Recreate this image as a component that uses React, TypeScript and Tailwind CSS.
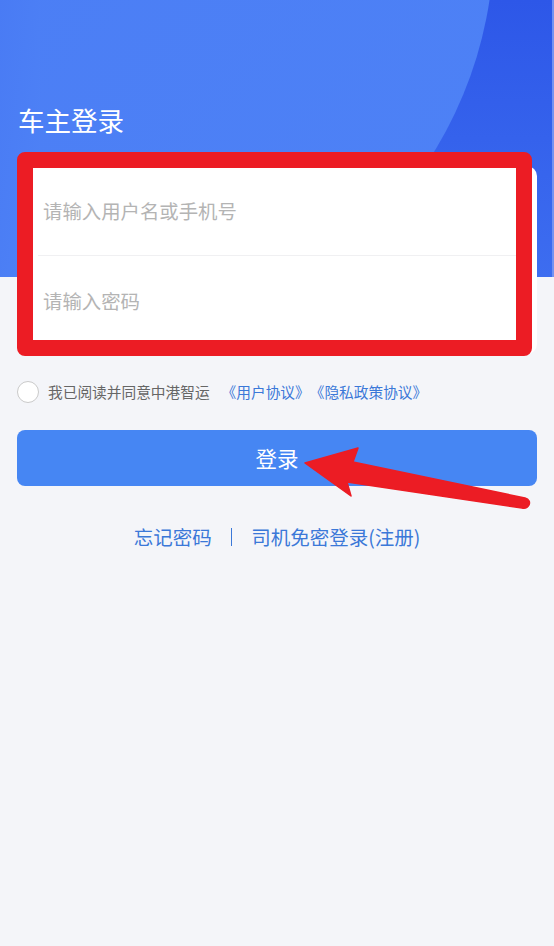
import React from "react";

function Open() {
  return <span className="inline-block w-[14.7px] text-right">《</span>;
}
function Close() {
  return <span className="inline-block w-[14.7px] text-left">》</span>;
}

export default function App() {
  return (
    <div className="relative w-full min-h-[946px] bg-[#f4f5f9] font-['Noto_Sans_CJK_SC','Noto_Sans',sans-serif] overflow-hidden">
      {/* Header */}
      <div className="relative h-[277px] overflow-hidden">
        <svg className="absolute inset-0" width="554" height="277" viewBox="0 0 554 277">
          <defs>
            <linearGradient id="dark" x1="0" y1="0" x2="0" y2="1">
              <stop offset="0" stopColor="#2d57e8" />
              <stop offset="1" stopColor="#3d6df0" />
            </linearGradient>
            <linearGradient id="light" x1="0" y1="0" x2="1" y2="1">
              <stop offset="0" stopColor="#497bf4" />
              <stop offset="1" stopColor="#4e82f6" />
            </linearGradient>
          </defs>
          <rect x="0" y="0" width="554" height="277" fill="url(#dark)" />
          <circle cx="90" cy="-60" r="404" fill="url(#light)" />
          <rect x="0" y="-10" width="40" height="300" fill="url(#light)" />
          <rect x="552" y="0" width="2" height="277" fill="#7393f2" />
        </svg>
        <div className="relative pt-[101px] pl-[18px] text-[26.5px] leading-[38px] text-white">
          车主登录
        </div>
      </div>

      {/* Content */}
      <div className="relative -mt-[111px] px-[17px]">
        <div className="rounded-[10px] bg-white pb-[8px]">
          <div className="mx-[21px] flex h-[90px] items-center border-b border-[#f0f0f2]">
            <input
              className="w-full bg-transparent pl-[5px] text-[19.4px] text-[#333] outline-none placeholder:text-[#b4b4b4]"
              placeholder="请输入用户名或手机号"
            />
          </div>
          <div className="mx-[21px] flex h-[90px] items-center">
            <input
              type="password"
              className="w-full bg-transparent pl-[5px] text-[19.4px] text-[#333] outline-none placeholder:text-[#b4b4b4]"
              placeholder="请输入密码"
            />
          </div>
        </div>

        <div className="mt-[27px] flex h-[22px] items-center">
          <div className="h-[22px] w-[22px] rounded-full border-[1.5px] border-[#cacaca] bg-white" />
          <span className="ml-[9px] text-[14.7px] leading-[22px] text-[#666]">我已阅读并同意中港智运</span>
          <span className="ml-[12px] whitespace-nowrap text-[14.7px] leading-[22px] text-[#3b78d8]">
            <Open />用户协议<Close />
            <Open />隐私政策协议<Close />
          </span>
        </div>

        <button className="mt-[27px] flex h-[56px] w-full items-center justify-center rounded-[8px] bg-[#4686f3] text-[21.5px] text-white">
          登录
        </button>

        <div className="mt-[37px] flex items-center justify-center text-[19.5px] leading-[28px] text-[#3b78d8]">
          <span>忘记密码</span>
          <span className="mx-[19px] h-[18px] w-[1.5px] bg-[#3b78d8]" />
          <span>司机免密登录(注册)</span>
        </div>
      </div>

      {/* Red annotation box */}
      <div className="absolute left-[17px] top-[152px] h-[204px] w-[515px] rounded-[8px] border-[16px] border-[#ec1c24]" />

      {/* Red arrow */}
      <svg className="absolute left-0 top-0 pointer-events-none" width="554" height="946" viewBox="0 0 554 946">
        <path
          d="M305 463 L358 448 L353 462 L525 498 Q531 500 529 505 Q527 509 522 508 L347 482 L351 496 Z"
          fill="#ec1c24"
          stroke="#ec1c24"
          strokeWidth="1.5"
          strokeLinejoin="round"
        />
      </svg>
    </div>
  );
}
